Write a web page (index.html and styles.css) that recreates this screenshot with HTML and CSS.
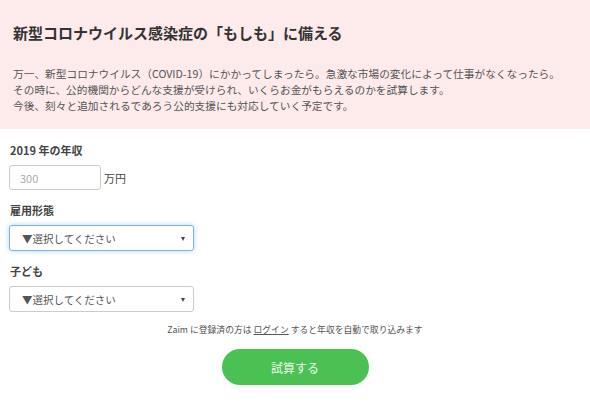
FILE: index.html
```html
<!DOCTYPE html>
<html lang="ja">
<head>
    <meta charset="UTF-8">
    <meta name="viewport" content="width=device-width, initial-scale=1.0">
    <title>新型コロナウイルス感染症の「もしも」に備える</title>
    <link rel="stylesheet" href="styles.css">
</head>
<body>
    <section class="intro">
        <h1>新型コロナウイルス感染症の「もしも」に備える</h1>
        <p>
            万一、新型コロナウイルス（COVID-19）にかかってしまったら。急激な市場の変化によって仕事がなくなったら。<br>
            その時に、公的機関からどんな支援が受けられ、いくらお金がもらえるのかを試算します。<br>
            今後、刻々と追加されるであろう公的支援にも対応していく予定です。
        </p>
    </section>

    <form class="calc" onsubmit="return false;">
        <div class="field">
            <label class="field-label" for="income">2019 年の年収</label>
            <div class="income-row">
                <input type="text" id="income" class="income-input" placeholder="300">
                <span class="unit">万円</span>
            </div>
        </div>

        <div class="field">
            <label class="field-label" for="employment">雇用形態</label>
            <div class="select-wrap">
                <select id="employment" class="select is-focused">
                    <option>▼選択してください</option>
                    <option>正社員</option>
                    <option>契約社員・派遣社員</option>
                    <option>パート・アルバイト</option>
                    <option>自営業・フリーランス</option>
                </select>
            </div>
        </div>

        <div class="field">
            <label class="field-label" for="children">子ども</label>
            <div class="select-wrap">
                <select id="children" class="select">
                    <option>▼選択してください</option>
                    <option>いない</option>
                    <option>いる</option>
                </select>
            </div>
        </div>

        <p class="login-note">Zaim に登録済の方は <a href="#">ログイン</a> すると年収を自動で取り込みます</p>

        <button type="submit" class="btn-calc">試算する</button>
    </form>
</body>
</html>
```

FILE: styles.css
```css
/* Base */
body {
    margin: 0;
    padding: 0;
    background: #fff;
    color: #333;
    font-family: "Noto Sans CJK JP", "Noto Sans", sans-serif;
}

/* Pink intro block */
.intro {
    background: #fdeaeb;
    padding: 23px 13px 15px;
}

.intro h1 {
    margin: 0 0 23px;
    font-size: 15px;
    line-height: 20px;
    font-weight: bold;
    color: #333;
}

.intro p {
    margin: 0;
    font-size: 10.7px;
    line-height: 16px;
    color: #555;
    white-space: nowrap;
}

/* Form */
.calc {
    padding: 13px 9px 0;
}

.field {
    margin-bottom: 12px;
}

.field-label {
    display: block;
    margin-bottom: 7px;
    padding-left: 1px;
    font-size: 11px;
    line-height: 16px;
    font-weight: bold;
    color: #444;
}

.income-row {
    display: flex;
    align-items: center;
    gap: 3px;
}

.income-input {
    box-sizing: border-box;
    width: 92px;
    height: 25px;
    padding: 0 10px;
    border: 1px solid #ccc;
    border-radius: 3px;
    font-family: inherit;
    font-size: 11px;
    color: #555;
}

.income-input::placeholder {
    color: #aaa;
}

.unit {
    font-size: 11px;
    color: #444;
}

.select-wrap {
    position: relative;
    width: 185px;
    height: 26px;
}

/* little triangle on the right of the select */
.select-wrap::after {
    content: "";
    position: absolute;
    right: 9px;
    top: 12px;
    border-left: 2.5px solid transparent;
    border-right: 2.5px solid transparent;
    border-top: 4px solid #444;
    pointer-events: none;
}

.select {
    display: block;
    box-sizing: border-box;
    width: 185px;
    height: 26px;
    margin: 0;
    padding: 0 12px;
    border: 1px solid #ccc;
    border-radius: 3px;
    background: #fff;
    font-family: inherit;
    font-size: 10.5px;
    color: #555;
    -webkit-appearance: none;
    appearance: none;
}

.select.is-focused {
    border-color: #7ab4e0;
    box-shadow: 0 0 5px rgba(102, 175, 233, 0.55);
    outline: none;
}

.login-note {
    margin: 0 0 13px;
    text-align: center;
    font-size: 8.8px;
    line-height: 12px;
    color: #555;
}

.login-note a {
    color: #555;
}

.btn-calc {
    display: block;
    width: 147px;
    height: 36px;
    margin: 0 auto;
    border: none;
    border-radius: 18px;
    background: #4bc153;
    color: #eefaef;
    font-family: inherit;
    font-size: 12px;
    cursor: pointer;
}
```
